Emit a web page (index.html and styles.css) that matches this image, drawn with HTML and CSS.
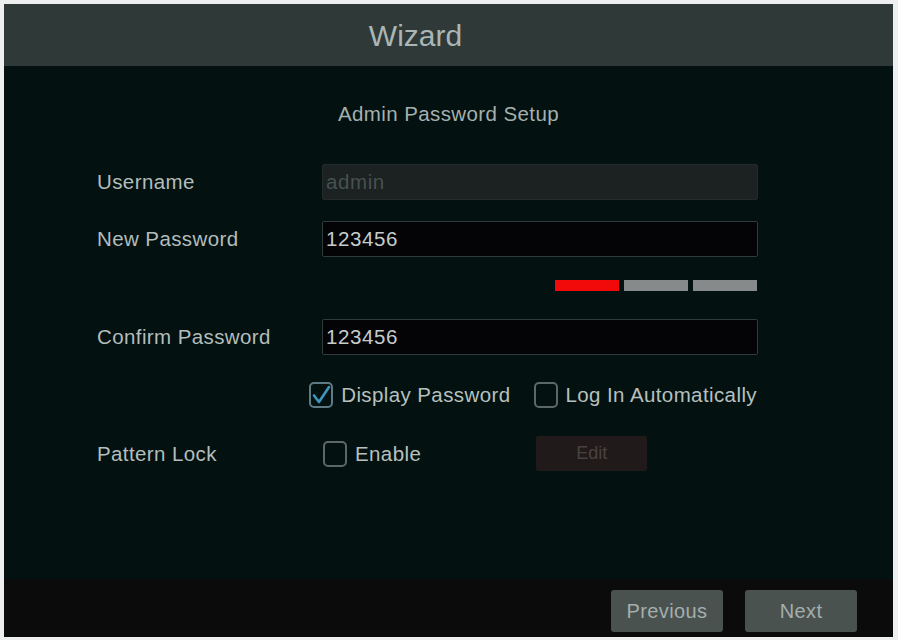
FILE: index.html
```html
<!DOCTYPE html>
<html lang="en">
<head>
<meta charset="utf-8">
<title>Wizard</title>
<link rel="stylesheet" href="styles.css">
</head>
<body>
<div class="wizard">
  <header class="wizard-title">Wizard</header>
  <main class="wizard-body">
    <div class="section-title">Admin Password Setup</div>

    <div class="form-row row-user">
      <label class="field-label">Username</label>
      <div class="input input-disabled">admin</div>
    </div>

    <div class="form-row row-newpw">
      <label class="field-label">New Password</label>
      <div class="input">123456</div>
    </div>

    <div class="form-row row-strength">
      <span></span>
      <div class="strength">
        <span class="seg seg-weak"></span>
        <span class="seg"></span>
        <span class="seg"></span>
      </div>
    </div>

    <div class="form-row row-confirm">
      <label class="field-label">Confirm Password</label>
      <div class="input">123456</div>
    </div>

    <div class="form-row row-options">
      <span></span>
      <div class="options">
        <span class="check-item">
          <span class="checkbox checked">
            <svg viewBox="0 0 24 26" width="24" height="26"><path d="M5 13.5 L10 20 L20 5" fill="none" stroke="#3f95bb" stroke-width="2.6" stroke-linecap="round" stroke-linejoin="round"/></svg>
          </span>
          <span class="check-text">Display Password</span>
        </span>
        <span class="check-item">
          <span class="checkbox"></span>
          <span class="check-text">Log In Automatically</span>
        </span>
      </div>
    </div>

    <div class="form-row row-pattern">
      <label class="field-label">Pattern Lock</label>
      <div class="pattern">
        <span class="check-item">
          <span class="checkbox"></span>
          <span class="check-text">Enable</span>
        </span>
        <button class="btn-edit" disabled>Edit</button>
      </div>
    </div>
  </main>
  <footer class="wizard-footer">
    <button class="btn">Previous</button>
    <button class="btn">Next</button>
  </footer>
</div>
</body>
</html>
```

FILE: styles.css
```css
html, body {
  height: 100%;
}

body {
  margin: 0;
  background: #eef0f0;
  font-family: "Liberation Sans", Arial, sans-serif;
  padding: 4px 5px 3px 4px;
  box-sizing: border-box;
}

.wizard {
  height: 633px;
  width: 889px;
  display: flex;
  flex-direction: column;
  background: #031110;
}

.wizard-title {
  height: 62px;
  flex: none;
  background: #2f3a38;
  color: #a9b6b5;
  font-size: 30px;
  display: flex;
  align-items: center;
  justify-content: center;
  padding-right: 66px;
  padding-top: 2px;
  box-sizing: border-box;
}

.wizard-body {
  flex: 1;
  padding: 36px 0 0 93px;
  display: flex;
  flex-direction: column;
}

.section-title {
  color: #a3b0af;
  font-size: 20.5px;
  line-height: 24px;
  text-align: center;
  width: 889px;
  margin-left: -93px;
  letter-spacing: 0.4px;
}

.form-row {
  display: grid;
  grid-template-columns: 225px 436px;
  align-items: center;
}

.field-label {
  color: #b3bdbc;
  font-size: 20.5px;
  letter-spacing: 0.4px;
}

.row-user { margin-top: 38px; height: 36px; }
.row-newpw { margin-top: 21px; height: 36px; }
.row-strength { margin-top: 23px; height: 11px; }
.row-confirm { margin-top: 28px; height: 36px; }
.row-options { margin-top: 26px; height: 27px; }
.row-pattern { margin-top: 28px; height: 35px; }

.input {
  height: 36px;
  box-sizing: border-box;
  background: #040407;
  border: 1px solid #313b3a;
  border-radius: 2px;
  color: #c6cccb;
  font-size: 20.5px;
  letter-spacing: 0.6px;
  display: flex;
  align-items: center;
  padding-left: 3px;
}

.input-disabled {
  background: #1b2221;
  border-color: #242c2b;
  color: #46514f;
}

.strength {
  display: flex;
  justify-content: flex-end;
  gap: 5px;
  padding-right: 1px;
}

.seg {
  width: 64px;
  height: 11px;
  background: #878a8b;
}

.seg-weak {
  background: #f20a0a;
}

.options {
  display: flex;
  justify-content: flex-end;
  gap: 23px;
  padding-right: 1px;
}

.check-item {
  display: flex;
  align-items: center;
  gap: 8px;
  flex: none;
}

.checkbox {
  width: 24px;
  height: 26px;
  box-sizing: border-box;
  border: 2px solid #5d6766;
  border-radius: 5px;
  flex: none;
  position: relative;
}

.checkbox.checked {
  border-color: #5d7a85;
}

.checkbox svg {
  position: absolute;
  left: -2px;
  top: -2px;
}

.check-text {
  color: #b7c0bf;
  font-size: 20.5px;
  letter-spacing: 0.4px;
  white-space: nowrap;
}

.pattern {
  display: flex;
  align-items: center;
  padding-left: 1px;
}

.btn-edit {
  margin-left: 115px;
  width: 111px;
  height: 35px;
  background: #201a1a;
  border: none;
  border-radius: 2px;
  color: #4a4242;
  font-family: inherit;
  font-size: 18px;
}

.wizard-footer {
  height: 58px;
  flex: none;
  background: #0b0b0c;
  display: flex;
  justify-content: flex-end;
  align-items: flex-start;
  gap: 22px;
  padding: 11px 36px 0 0;
  box-sizing: border-box;
}

.btn {
  width: 112px;
  height: 42px;
  background: #4a5250;
  border: none;
  border-radius: 3px;
  color: #a4aeac;
  font-family: inherit;
  font-size: 20px;
  letter-spacing: 0.4px;
}
```
